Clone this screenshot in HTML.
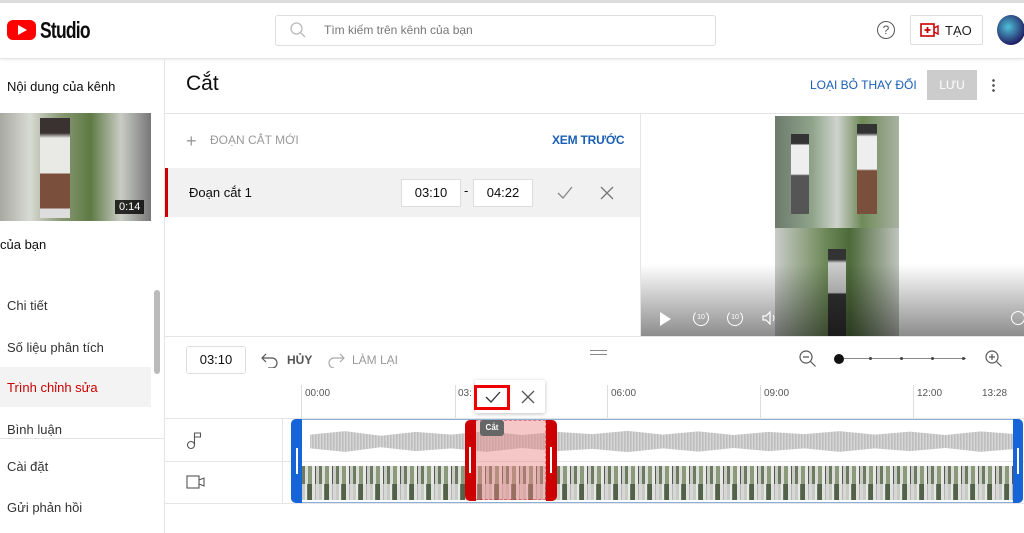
<!DOCTYPE html>
<html><head><meta charset="utf-8"><style>
*{box-sizing:border-box;margin:0;padding:0}
body{width:1024px;height:533px;overflow:hidden;background:#fff;font-family:"Liberation Sans",sans-serif;color:#0d0d0d;position:relative}
.a{position:absolute}
.t{font-size:12px;color:#222}
</style></head><body>
<div class="a" style="left:0;top:0;width:1024px;height:3px;background:#ddd"></div>
<div class="a" style="left:0;top:3px;width:1024px;height:56px;border-bottom:1px solid #e5e5e5;box-shadow:0 1px 3px rgba(0,0,0,.08)"></div>
<div class="a" style="left:7px;top:20px;width:29px;height:20px;background:#f00;border-radius:6px"></div>
<div class="a" style="left:18px;top:25px;width:0;height:0;border-left:9px solid #fff;border-top:5px solid transparent;border-bottom:5px solid transparent"></div>
<div class="a" style="left:40px;top:17px;font-size:23px;font-weight:bold;letter-spacing:-1px;transform:scaleX(.76);transform-origin:left">Studio</div>
<div class="a" style="left:275px;top:15px;width:441px;height:31px;border:1px solid #ddd;border-radius:3px"></div>
<svg class="a" style="left:290px;top:22px" width="16" height="16"><circle cx="6.5" cy="6.5" r="5.5" fill="none" stroke="#bbb" stroke-width="1.3"/><path d="M10.5 10.5L15 15" stroke="#bbb" stroke-width="1.3"/></svg>
<div class="a t" style="left:324px;top:23px;color:#777">Tìm kiếm trên kênh của bạn</div>
<div class="a" style="left:877px;top:21px;width:18px;height:18px;border:1.3px solid #555;border-radius:50%;font-size:12px;text-align:center;line-height:16px;color:#555">?</div>
<div class="a" style="left:910px;top:15px;width:73px;height:30px;border:1px solid #ddd;border-radius:2px"></div>
<svg class="a" style="left:920px;top:23px" width="20" height="14"><rect x="1" y="1" width="13" height="12" fill="none" stroke="#c00" stroke-width="1.6"/><path d="M7.5 4v6M4.5 7h6" stroke="#c00" stroke-width="1.8"/><path d="M14 5l4-2v8l-4-2" fill="none" stroke="#c00" stroke-width="1.4"/></svg>
<div class="a" style="left:945px;top:23px;font-size:13px;color:#222">TẠO</div>
<div class="a" style="left:997px;top:15px;width:28px;height:30px;border-radius:50%;background:radial-gradient(circle at 40% 40%,#4ec0d8,#226 70%)"></div>
<div class="a" style="left:164px;top:59px;width:1px;height:474px;background:#e5e5e5"></div>
<div class="a" style="left:7px;top:79px;font-size:13px">Nội dung của kênh</div>
<div class="a" style="left:0;top:113px;width:151px;height:108px;background:linear-gradient(90deg,#a8a9a2,#d8dad4 20%,#8a9a76 40%,#5e7a44 60%,#c9ccc4 80%,#777)"></div>
<div class="a" style="left:40px;top:118px;width:30px;height:100px;background:linear-gradient(#3a3230 15%,#e9e9e6 20% 55%,#7a4f3c 56% 90%,#ddd 91%)"></div>
<div class="a" style="left:115px;top:200px;padding:1px 4px;background:rgba(0,0,0,.8);color:#fff;font-size:11px">0:14</div>
<div class="a" style="left:0;top:237px;font-size:13px">của bạn</div>
<div class="a" style="left:7px;top:298px;font-size:13px;color:#333">Chi tiết</div>
<div class="a" style="left:7px;top:340px;font-size:13px;color:#333">Số liệu phân tích</div>
<div class="a" style="left:0;top:367px;width:151px;height:40px;background:#f3f3f3"></div>
<div class="a" style="left:7px;top:380px;font-size:13px;color:#c00">Trình chỉnh sửa</div>
<div class="a" style="left:7px;top:422px;font-size:13px;color:#333">Bình luận</div>
<div class="a" style="left:154px;top:290px;width:6px;height:84px;background:#bbb;border-radius:3px"></div>
<div class="a" style="left:0;top:438px;width:164px;height:1px;background:#e5e5e5"></div>
<div class="a" style="left:7px;top:459px;font-size:13px;color:#333">Cài đặt</div>
<div class="a" style="left:7px;top:500px;font-size:13px;color:#333">Gửi phản hồi</div>
<div class="a" style="left:186px;top:72px;font-size:21px">Cắt</div>
<div class="a" style="left:810px;top:78px;font-size:12px;color:#1a5fb4">LOẠI BỎ THAY ĐỔI</div>
<div class="a" style="left:927px;top:70px;width:50px;height:30px;background:#ccc;color:#fff;font-size:12px;text-align:center;line-height:30px">LƯU</div>
<div class="a" style="left:992px;top:78px;width:3px;height:14px;background:radial-gradient(circle,#555 1.2px,transparent 1.5px) 0 0/3px 5px"></div>
<div class="a" style="left:165px;top:113px;width:859px;height:1px;background:#e5e5e5"></div>
<div class="a" style="left:186px;top:131px;font-size:18px;color:#999;font-weight:300">+</div>
<div class="a" style="left:210px;top:133px;font-size:12px;color:#999">ĐOẠN CẮT MỚI</div>
<div class="a" style="left:552px;top:133px;font-size:12px;color:#1a5fb4;font-weight:bold;letter-spacing:-.2px">XEM TRƯỚC</div>
<div class="a" style="left:165px;top:168px;width:475px;height:49px;background:#f1f1f1;border-left:3px solid #c00"></div>
<div class="a" style="left:189px;top:185px;font-size:13px">Đoạn cắt 1</div>
<div class="a" style="left:401px;top:179px;width:60px;height:28px;border:1px solid #ddd;background:#fff;font-size:13px;text-align:center;line-height:26px">03:10</div>
<div class="a" style="left:464px;top:183px;font-size:13px">-</div>
<div class="a" style="left:473px;top:179px;width:60px;height:28px;border:1px solid #ddd;background:#fff;font-size:13px;text-align:center;line-height:26px">04:22</div>
<svg class="a" style="left:556px;top:185px" width="18" height="16"><path d="M2 8l5 5L16 2" fill="none" stroke="#888" stroke-width="1.3"/></svg>
<svg class="a" style="left:600px;top:186px" width="14" height="14"><path d="M1 1l12 12M13 1L1 13" stroke="#777" stroke-width="1.3"/></svg>
<div class="a" style="left:640px;top:114px;width:384px;height:222px;background:#fff;border-left:1px solid #e5e5e5;overflow:hidden">
 <div class="a" style="left:134px;top:2px;width:124px;height:112px;background:linear-gradient(90deg,#6d7a6d,#8fa48a 30%,#cfd3cd 50%,#6f8a58 70%,#a8b2a2)"></div>
 <div class="a" style="left:150px;top:20px;width:18px;height:80px;background:linear-gradient(#333 12%,#eee 14% 50%,#555 52%)"></div>
 <div class="a" style="left:216px;top:10px;width:20px;height:90px;background:linear-gradient(#333 10%,#eee 14% 50%,#7a4f3c 52%)"></div>
 <div class="a" style="left:134px;top:114px;width:124px;height:108px;background:linear-gradient(90deg,#c9ccc8,#6e8a5a 40%,#4d6a3a 60%,#bfc3bd)"></div>
 <div class="a" style="left:187px;top:135px;width:18px;height:87px;background:linear-gradient(#333 12%,#ccc 16% 50%,#333 52%)"></div>
 <div class="a" style="left:0;top:150px;width:384px;height:72px;background:linear-gradient(rgba(0,0,0,0),rgba(0,0,0,.45))"></div>
 <div class="a" style="left:19px;top:198px;border-left:11px solid #fff;border-top:7px solid transparent;border-bottom:7px solid transparent"></div>
 <div class="a" style="left:52px;top:196px;width:16px;height:16px;border:1.5px solid #fff;border-radius:50%;border-top-color:transparent;font-size:7px;color:#fff;text-align:center;line-height:13px">10</div>
 <div class="a" style="left:86px;top:196px;width:16px;height:16px;border:1.5px solid #fff;border-radius:50%;border-top-color:transparent;font-size:7px;color:#fff;text-align:center;line-height:13px">10</div>
 <svg class="a" style="left:121px;top:197px" width="16" height="14"><path d="M1 5h3l4-4v12l-4-4H1z" fill="none" stroke="#fff" stroke-width="1.2"/><path d="M11 4q2 3 0 6" fill="none" stroke="#fff"/></svg>
 <div class="a" style="left:370px;top:197px;width:14px;height:14px;border:1.5px solid #fff;border-radius:50%"></div>
</div>
<div class="a" style="left:165px;top:336px;width:859px;height:1px;background:#e5e5e5"></div>
<div class="a" style="left:186px;top:346px;width:60px;height:28px;border:1px solid #ddd;border-radius:3px;font-size:13px;text-align:center;line-height:26px">03:10</div>
<svg class="a" style="left:261px;top:352px" width="18" height="16"><path d="M5 2L1 6l4 4M1 6h10a5 5 0 010 10H7" fill="none" stroke="#555" stroke-width="1.2"/></svg>
<div class="a" style="left:287px;top:353px;font-size:12px;color:#555;font-weight:bold">HỦY</div>
<svg class="a" style="left:327px;top:352px" width="18" height="16"><path d="M13 2l4 4-4 4M17 6H7a5 5 0 000 10" fill="none" stroke="#aaa" stroke-width="1.2"/></svg>
<div class="a" style="left:352px;top:353px;font-size:12px;color:#999">LÀM LẠI</div>
<div class="a" style="left:590px;top:350px;width:17px;height:5px;border-top:1.3px solid #888;border-bottom:1.3px solid #888"></div>
<svg class="a" style="left:799px;top:350px" width="18" height="18"><circle cx="7" cy="7" r="6" fill="none" stroke="#555" stroke-width="1.2"/><path d="M4 7h6M11.5 11.5l5 5" stroke="#555" stroke-width="1.2"/></svg>
<div class="a" style="left:834px;top:354px;width:10px;height:10px;background:#111;border-radius:50%"></div>
<div class="a" style="left:844px;top:358px;width:122px;height:1px;background:#888"></div>
<div class="a" style="left:869px;top:357px;width:3px;height:3px;background:#444;border-radius:50%"></div>
<div class="a" style="left:900px;top:357px;width:3px;height:3px;background:#444;border-radius:50%"></div>
<div class="a" style="left:931px;top:357px;width:3px;height:3px;background:#444;border-radius:50%"></div>
<div class="a" style="left:962px;top:357px;width:3px;height:3px;background:#444;border-radius:50%"></div>
<svg class="a" style="left:985px;top:350px" width="18" height="18"><circle cx="7" cy="7" r="6" fill="none" stroke="#555" stroke-width="1.2"/><path d="M4 7h6M7 4v6M11.5 11.5l5 5" stroke="#555" stroke-width="1.2"/></svg>
<div class="a" style="left:301px;top:385px;width:1px;height:33px;background:#ddd"></div>
<div class="a" style="left:305px;top:388px;font-size:10px;color:#555">00:00</div>
<div class="a" style="left:455px;top:385px;width:1px;height:33px;background:#ddd"></div>
<div class="a" style="left:458px;top:388px;font-size:10px;color:#555">03:</div>
<div class="a" style="left:607px;top:385px;width:1px;height:33px;background:#ddd"></div>
<div class="a" style="left:611px;top:388px;font-size:10px;color:#555">06:00</div>
<div class="a" style="left:760px;top:385px;width:1px;height:33px;background:#ddd"></div>
<div class="a" style="left:764px;top:388px;font-size:10px;color:#555">09:00</div>
<div class="a" style="left:913px;top:385px;width:1px;height:33px;background:#ddd"></div>
<div class="a" style="left:917px;top:388px;font-size:10px;color:#555">12:00</div>
<div class="a" style="left:982px;top:388px;font-size:10px;color:#555">13:28</div>
<div class="a" style="left:165px;top:418px;width:859px;height:1px;background:#e5e5e5"></div>
<div class="a" style="left:165px;top:461px;width:859px;height:1px;background:#e5e5e5"></div>
<div class="a" style="left:165px;top:503px;width:859px;height:1px;background:#e5e5e5"></div>
<div class="a" style="left:282px;top:418px;width:1px;height:85px;background:#e5e5e5"></div>
<svg class="a" style="left:186px;top:430px" width="18" height="20"><circle cx="5" cy="15" r="3.5" fill="none" stroke="#555" stroke-width="1.1"/><path d="M8.5 15V3h6v4h-6" fill="none" stroke="#555" stroke-width="1.1"/></svg>
<svg class="a" style="left:186px;top:474px" width="20" height="16"><rect x="1" y="2" width="12" height="12" fill="none" stroke="#555" stroke-width="1.1"/><path d="M13 6l5-2v8l-5-2" fill="none" stroke="#555" stroke-width="1.1"/></svg>
<div class="a" style="left:291px;top:419px;width:732px;height:84px;border:1px solid #8ab0d8;border-radius:5px"></div>
<div class="a" style="left:310px;top:430px;width:706px;height:23px;background:repeating-linear-gradient(90deg,#c8c8c8 0 1px,#d6d6d6 1px 2px,#bdbdbd 2px 3px);clip-path:polygon(0 20%,5% 5%,10% 25%,15% 8%,20% 20%,25% 5%,30% 22%,35% 8%,40% 18%,45% 4%,50% 20%,55% 6%,60% 22%,65% 8%,70% 18%,75% 5%,80% 20%,85% 7%,90% 22%,95% 6%,100% 18%,100% 82%,95% 95%,90% 78%,85% 92%,80% 80%,75% 95%,70% 80%,65% 92%,60% 78%,55% 94%,50% 80%,45% 96%,40% 82%,35% 92%,30% 78%,25% 95%,20% 80%,15% 92%,10% 75%,5% 95%,0 80%)"></div>
<div class="a" style="left:302px;top:466px;width:714px;height:34px;background:repeating-linear-gradient(90deg,#6b7a60 0 3px,#dcdcd8 3px 6px,#8a9a7a 6px 10px,#e8e8e4 10px 13px,#555 13px 14px,#c8ccc4 14px 17px)"></div>
<div class="a" style="left:302px;top:484px;width:714px;height:16px;background:repeating-linear-gradient(90deg,#eee 0 5px,#3a4a32 5px 10px,#ddd 10px 17px);opacity:.7"></div>
<div class="a" style="left:291px;top:419px;width:11px;height:84px;background:#1565d8;border-radius:5px 0 0 5px"></div>
<div class="a" style="left:296px;top:448px;width:2px;height:26px;background:#fff"></div>
<div class="a" style="left:1013px;top:419px;width:10px;height:84px;background:#1565d8;border-radius:0 5px 5px 0"></div>
<div class="a" style="left:1017px;top:448px;width:2px;height:26px;background:#fff"></div>
<div class="a" style="left:475px;top:420px;width:71px;height:80px;background:rgba(235,130,130,.45);border:1px dashed rgba(200,0,0,.4)"></div>
<div class="a" style="left:465px;top:420px;width:11px;height:81px;background:#cc0000;border-radius:5px 0 0 5px"></div>
<div class="a" style="left:469px;top:447px;width:2px;height:26px;background:#fff"></div>
<div class="a" style="left:546px;top:420px;width:11px;height:81px;background:#cc0000;border-radius:0 5px 5px 0"></div>
<div class="a" style="left:550px;top:447px;width:2px;height:26px;background:#fff"></div>
<div class="a" style="left:480px;top:420px;width:24px;height:16px;background:#666;border-radius:3px;color:#fff;font-size:8px;font-weight:bold;text-align:center;line-height:16px">Cắt</div>
<div class="a" style="left:475px;top:380px;width:70px;height:33px;background:#fff;box-shadow:0 1px 4px rgba(0,0,0,.25);border-radius:2px"></div>
<div class="a" style="left:474px;top:385px;width:36px;height:25px;border:3px solid #e00"></div>
<svg class="a" style="left:484px;top:390px" width="18" height="14"><path d="M2 7l5 5L16 2" fill="none" stroke="#333" stroke-width="1.3"/></svg>
<svg class="a" style="left:521px;top:390px" width="14" height="14"><path d="M1 1l12 12M13 1L1 13" stroke="#555" stroke-width="1.3"/></svg>
</body></html>
